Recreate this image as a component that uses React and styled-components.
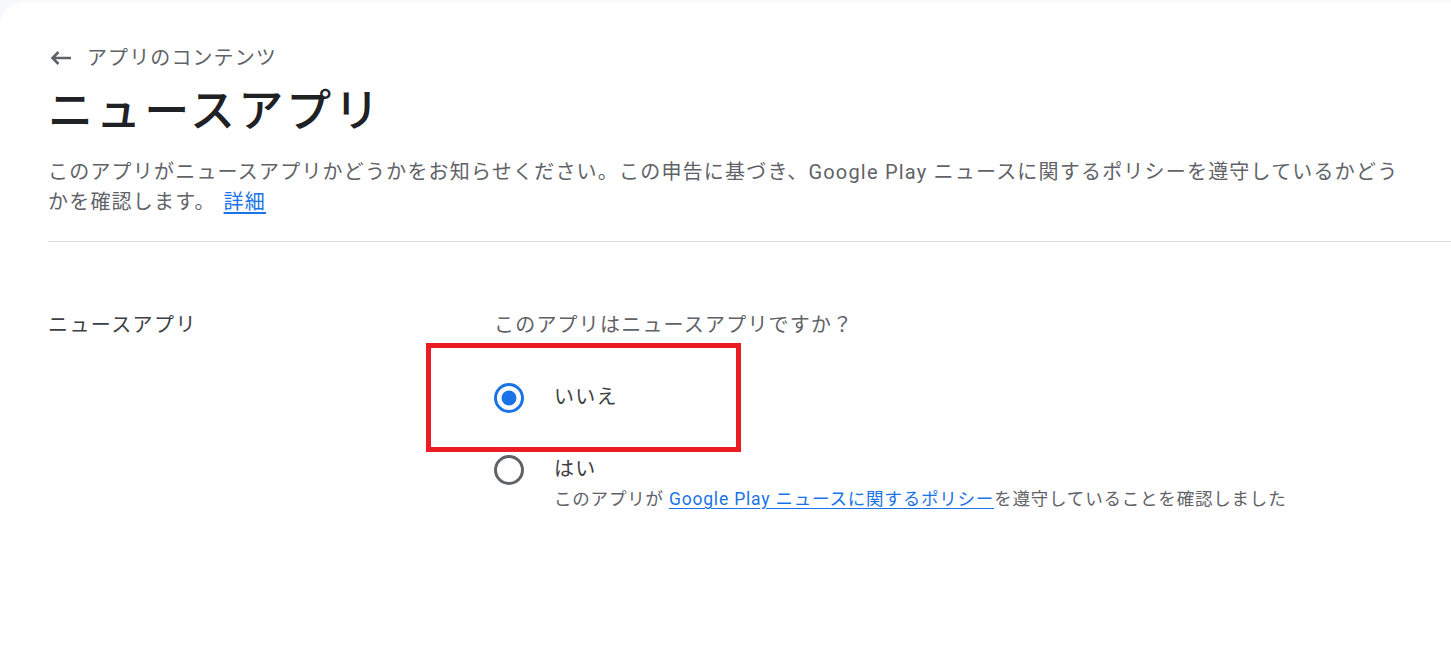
import React, {useState} from 'react';
import styled, {createGlobalStyle} from 'styled-components';

const GlobalStyle = createGlobalStyle`
    html, body {
        margin: 0;
        padding: 0;
        background: #f6f8fc;
        font-family: Roboto, "Noto Sans CJK JP", sans-serif;
        overflow: hidden;
    }
`;

const Page = styled.div`
    padding-top: 2px;
    height: 670px;
    box-sizing: border-box;
`;

const Card = styled.main`
    background: #ffffff;
    border-top-left-radius: 24px;
    height: 100%;
    padding: 41px 0 0 48px;
    box-sizing: border-box;
`;

const BackLink = styled.a`
    display: inline-flex;
    align-items: center;
    gap: 15px;
    color: #5f6368;
    font-size: 20px;
    line-height: 30px;
    letter-spacing: 1.1px;
    text-decoration: none;
    padding-left: 2px;
`;

const Title = styled.h1`
    margin: 11px 0 0;
    font-size: 45px;
    line-height: 56px;
    font-weight: 500;
    letter-spacing: 3.1px;
    color: #202124;
`;

const Description = styled.p`
    margin: 17px 0 0;
    max-width: 1362px;
    font-size: 20px;
    line-height: 30px;
    letter-spacing: 1.2px;
    color: #5f6368;
`;

const Link = styled.a`
    color: #1a73e8;
    text-decoration: underline;
    text-underline-offset: 3px;
    margin-left: ${p => p.$gap || 0}px;
`;

const Divider = styled.hr`
    margin: 24px 0 0;
    border: 0;
    border-top: 1px solid #dadce0;
`;

const Section = styled.section`
    display: grid;
    grid-template-columns: 446px 1fr;
    margin-top: 68px;
`;

const SectionLabel = styled.div`
    font-size: 20px;
    line-height: 30px;
    letter-spacing: 1.4px;
    color: #3c4043;
`;

const Question = styled.div`
    font-size: 20px;
    line-height: 30px;
    letter-spacing: 1.2px;
    color: #5f6368;
`;

const OptionList = styled.div`
    display: flex;
    flex-direction: column;
    gap: 41px;
    margin-top: 42px;
`;

const Option = styled.label`
    position: relative;
    display: flex;
    align-items: flex-start;
    gap: 30px;
    cursor: pointer;

    ${p => p.$marked && `
        &::before {
            content: '';
            position: absolute;
            left: -68px;
            top: -39px;
            width: 315px;
            height: 109px;
            border: 5px solid #ec1c24;
            box-sizing: border-box;
            pointer-events: none;
        }
    `}
`;

const RadioBox = styled.span`
    display: flex;
    flex: none;
    margin-top: 1px;
`;

const OptionText = styled.div`
    display: flex;
    flex-direction: column;
`;

const OptionLabel = styled.span`
    font-size: 20px;
    line-height: 30px;
    letter-spacing: 1.2px;
    color: #3c4043;
`;

const Helper = styled.span`
    margin-top: 2px;
    font-size: 17.5px;
    line-height: 26px;
    letter-spacing: 0.8px;
    color: #5f6368;
`;

function BackArrow() {
    return (
        <svg width="22" height="14" viewBox="0 0 22 14" fill="none">
            <path d="M21 7H2.5M8.5 1L2.5 7l6 6" stroke="#5f6368" strokeWidth="2.6"/>
        </svg>
    );
}

function Radio({checked}) {
    const color = checked ? '#1a73e8' : '#5f6368';

    return (
        <RadioBox>
            <svg width="30" height="30" viewBox="0 0 30 30">
                <circle cx="15" cy="15" r="13.5" fill="none" stroke={color} strokeWidth="3"/>
                {checked && <circle cx="15" cy="15" r="7.5" fill={color}/>}
            </svg>
        </RadioBox>
    );
}

export default function App() {
    const [answer, setAnswer] = useState('no');

    return (
        <Page>
            <GlobalStyle/>
            <Card>
                <BackLink href="#">
                    <BackArrow/>
                    アプリのコンテンツ
                </BackLink>
                <Title>ニュースアプリ</Title>
                <Description>
                    このアプリがニュースアプリかどうかをお知らせください。この申告に基づき、Google Play ニュースに関するポリシーを遵守しているかどうかを確認します。
                    <Link href="#" $gap={8}>詳細</Link>
                </Description>
                <Divider/>
                <Section>
                    <SectionLabel>ニュースアプリ</SectionLabel>
                    <div>
                        <Question>このアプリはニュースアプリですか？</Question>
                        <OptionList>
                            <Option $marked onClick={() => setAnswer('no')}>
                                <Radio checked={answer === 'no'}/>
                                <OptionText>
                                    <OptionLabel>いいえ</OptionLabel>
                                </OptionText>
                            </Option>
                            <Option onClick={() => setAnswer('yes')}>
                                <Radio checked={answer === 'yes'}/>
                                <OptionText>
                                    <OptionLabel>はい</OptionLabel>
                                    <Helper>
                                        このアプリが <Link href="#">Google Play ニュースに関するポリシー</Link>を遵守していることを確認しました
                                    </Helper>
                                </OptionText>
                            </Option>
                        </OptionList>
                    </div>
                </Section>
            </Card>
        </Page>
    );
}
